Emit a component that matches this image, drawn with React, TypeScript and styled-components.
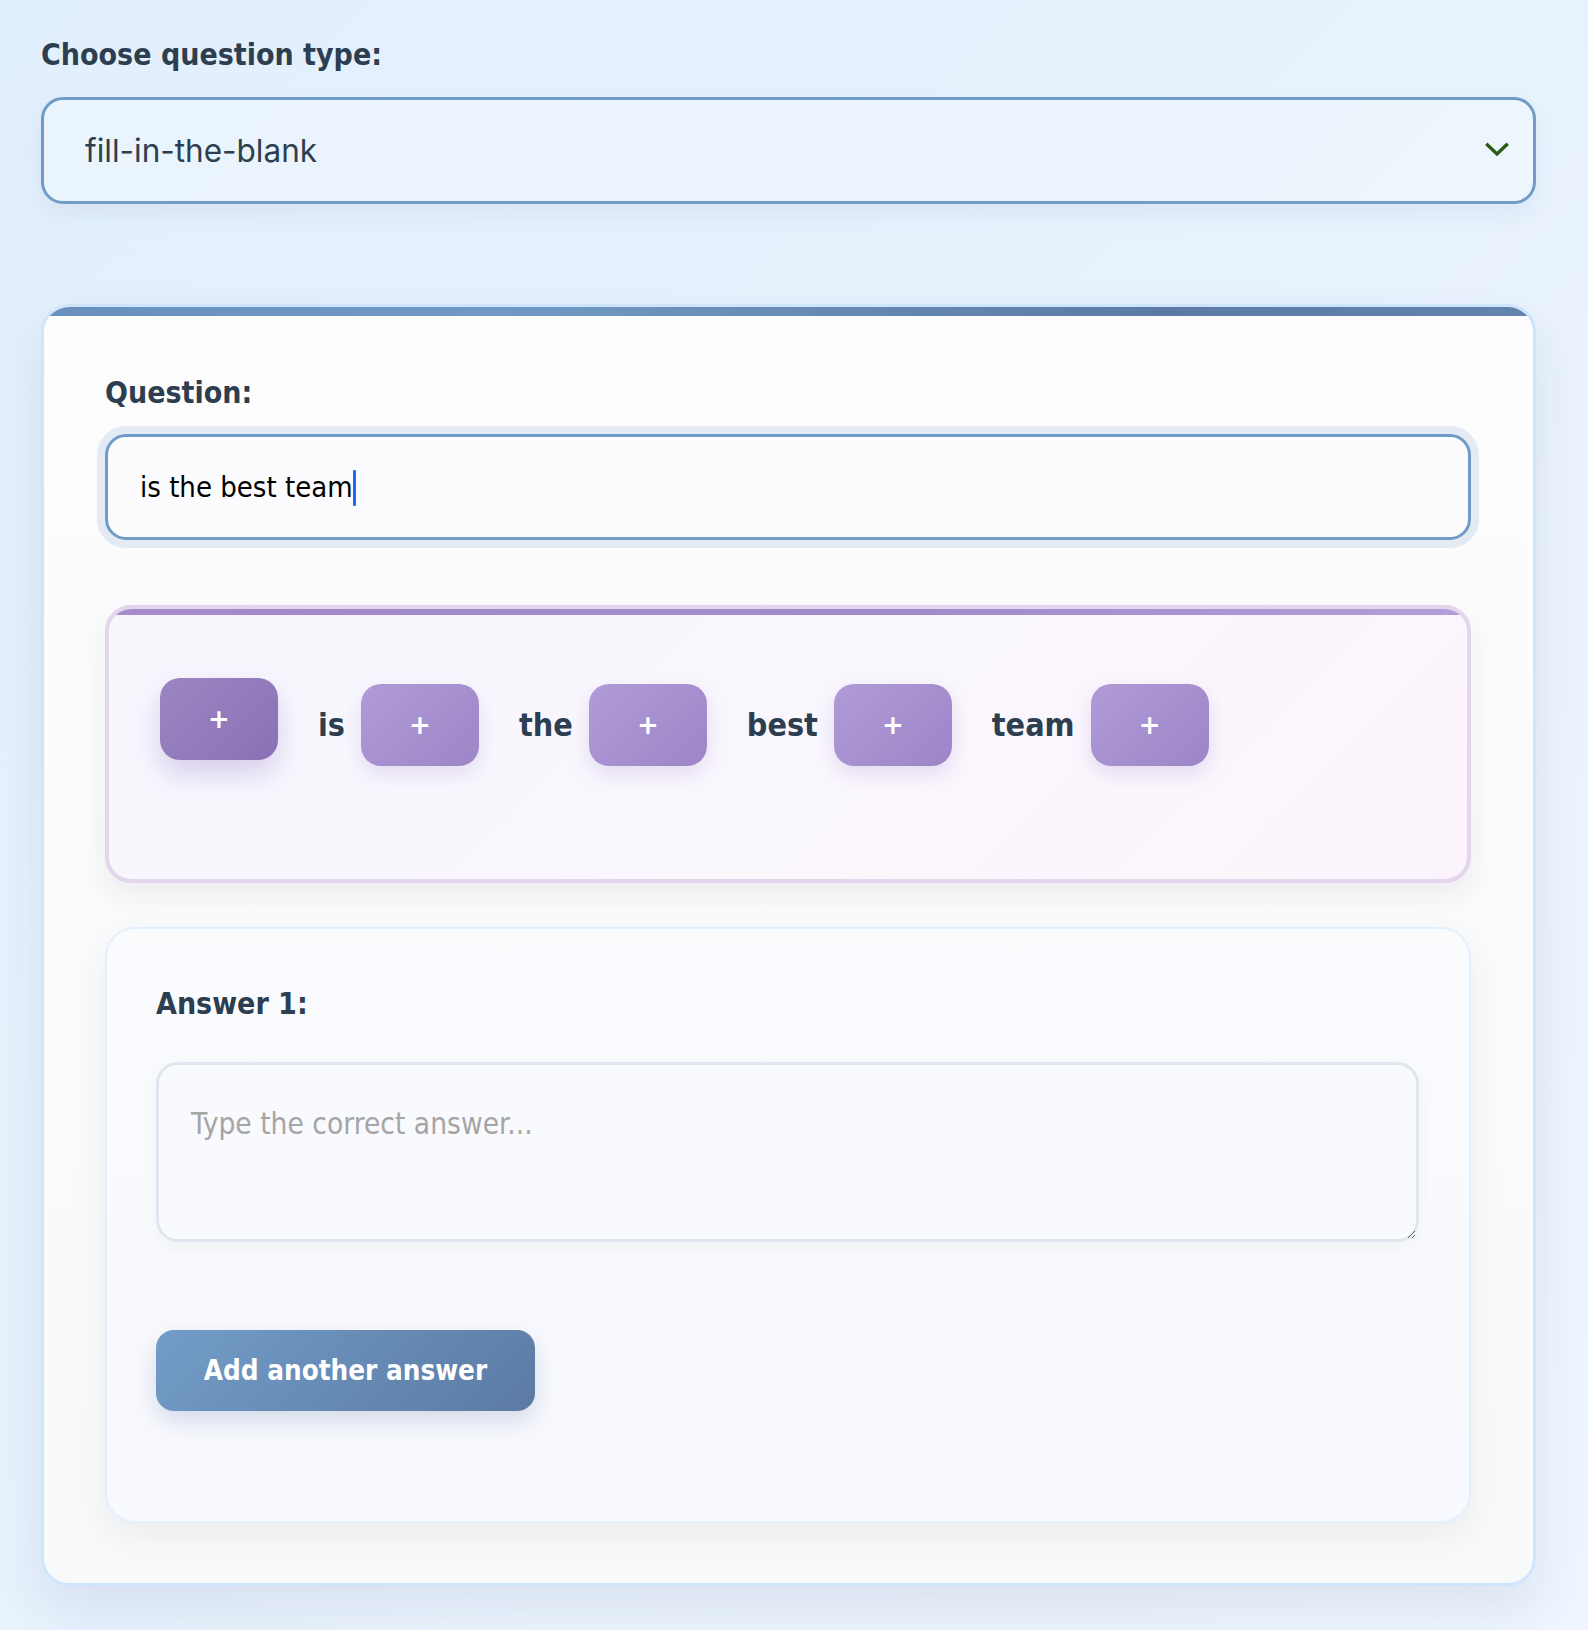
import React, { useLayoutEffect, useState } from "react";
import styled, { createGlobalStyle } from "styled-components";

const BODY_FONT = `"DejaVu Sans Condensed", "DejaVu Sans", sans-serif`;

const GlobalStyle = createGlobalStyle`
  html, body {
    margin: 0;
    padding: 0;
  }
  body {
    min-height: 1630px;
    background: linear-gradient(135deg, #e2effc 0%, #e8f2fd 50%, #eef5fe 100%);
    font-family: ${BODY_FONT};
    font-stretch: semi-condensed;
  }
  * { box-sizing: border-box; }
`;

const Page = styled.div`
  padding: 37px 52px 46px 41px;
  display: flex;
  flex-direction: column;
`;

const Label = styled.label<{ $mb?: number }>`
  display: block;
  font-family: ${BODY_FONT};
  font-stretch: semi-condensed;
  font-weight: 700;
  font-size: 30px;
  line-height: 36px;
  color: #2c3e50;
  margin-bottom: ${(p) => p.$mb ?? 24}px;
`;

const SelectWrap = styled.div`
  position: relative;
  width: 100%;
  margin-bottom: 100px;
`;

const Select = styled.select`
  appearance: none;
  -webkit-appearance: none;
  width: 100%;
  height: 107px;
  padding: 0 80px 0 41px;
  border: 3px solid #729cc8;
  border-radius: 22px;
  background: rgba(240, 247, 254, 0.55);
  box-shadow: 0 10px 24px rgba(60, 90, 130, 0.07);
  font-family: Inter, "Noto Sans", sans-serif;
  font-size: 31.5px;
  color: #2c3e50;
  outline: none;
`;

const Chevron = styled.svg`
  position: absolute;
  right: 27px;
  top: 45px;
  width: 24px;
  height: 16px;
  pointer-events: none;
`;

const Card = styled.section`
  position: relative;
  overflow: hidden;
  border: 3px solid #cfe5fc;
  border-radius: 28px;
  background: linear-gradient(180deg, #fdfdfe 0%, #f8f9fa 100%);
  box-shadow: 0 22px 50px rgba(40, 60, 100, 0.09);
  padding: 68px 62px 60px 61px;
  display: flex;
  flex-direction: column;
  &::before {
    content: "";
    position: absolute;
    left: 0;
    right: 0;
    top: 0;
    height: 9px;
    background: linear-gradient(90deg, #6a91bd 0%, #7299c6 30%, #5b7ba4 75%, #6384ae 100%);
  }
`;

const InputWrap = styled.div`
  position: relative;
  margin-bottom: 65px;
`;

const QuestionInput = styled.input`
  display: block;
  width: 100%;
  height: 106px;
  padding: 0 32px;
  border: 3px solid #729cc8;
  border-radius: 21px;
  background: #fcfcfe;
  box-shadow: 0 0 0 8px rgba(114, 156, 200, 0.18);
  font-family: ${BODY_FONT};
  font-stretch: semi-condensed;
  font-size: 29px;
  color: #000;
  caret-color: transparent;
  outline: none;
`;

const Caret = styled.span`
  position: absolute;
  top: 36px;
  width: 3px;
  height: 36px;
  border-radius: 1px;
  background: #1d6bf5;
  pointer-events: none;
`;

const BlankBox = styled.div`
  position: relative;
  overflow: hidden;
  border: 4px solid #e3d5eb;
  border-radius: 26px;
  background: linear-gradient(135deg, #f7f7fe 0%, #faf7fd 55%, #fcf4fc 100%);
  box-shadow: 0 12px 30px rgba(40, 40, 60, 0.07);
  padding: 75px 50px 113px 51px;
  margin-bottom: 44px;
  &::before {
    content: "";
    position: absolute;
    left: 0;
    right: 0;
    top: 0;
    height: 6px;
    background: linear-gradient(90deg, #a48bc9 0%, #a18ccb 60%, #b39ed9 100%);
  }
`;

const TokenRow = styled.div`
  display: flex;
  flex-wrap: wrap;
  align-items: center;
  gap: 16px;
`;

const Word = styled.span`
  margin-left: 24px;
  font-family: ${BODY_FONT};
  font-stretch: semi-condensed;
  font-weight: 700;
  font-size: 32px;
  color: #2c3e50;
  line-height: 1;
`;

const BlankButton = styled.button<{ $active?: boolean }>`
  width: 118px;
  height: 82px;
  border: none;
  border-radius: 20px;
  color: #fff;
  font-family: "DejaVu Sans", sans-serif;
  font-weight: 700;
  font-size: 26px;
  line-height: 1;
  display: flex;
  align-items: center;
  justify-content: center;
  cursor: pointer;
  background: ${(p) =>
    p.$active
      ? "linear-gradient(135deg, #9b85c3 0%, #8a71b5 100%)"
      : "linear-gradient(135deg, #b09bd8 0%, #9d85c7 100%)"};
  box-shadow: ${(p) =>
    p.$active
      ? "0 14px 28px rgba(130, 100, 190, 0.28)"
      : "0 8px 20px rgba(150, 120, 200, 0.22)"};
  transform: translateY(${(p) => (p.$active ? -6 : 0)}px);
`;

const AnswerCard = styled.div`
  border: 2px solid #e2effc;
  border-radius: 30px;
  background: linear-gradient(180deg, #fafbfd 0%, #f8f9fe 100%);
  box-shadow: 0 12px 34px rgba(40, 50, 70, 0.07);
  padding: 57px 50px 110px 49px;
  display: flex;
  flex-direction: column;
  align-items: flex-start;
`;

const AnswerArea = styled.textarea`
  width: 100%;
  height: 180px;
  padding: 42px 32px 20px;
  border: 3px solid #dfe6ef;
  border-radius: 22px;
  background: #f9fafe;
  box-shadow: 0 6px 16px rgba(40, 50, 70, 0.04);
  font-family: ${BODY_FONT};
  font-stretch: semi-condensed;
  font-size: 29.6px;
  line-height: 1.2;
  color: #2c3e50;
  outline: none;
  margin-bottom: 88px;
  &::placeholder {
    color: #a5a5a5;
  }
`;

const AddButton = styled.button`
  width: 379px;
  height: 81px;
  border: none;
  border-radius: 18px;
  background: linear-gradient(135deg, #729dc8 0%, #5b7aa3 100%);
  box-shadow: 0 10px 24px rgba(80, 110, 160, 0.22);
  color: #fff;
  font-family: ${BODY_FONT};
  font-stretch: semi-condensed;
  font-weight: 700;
  font-size: 27.6px;
  cursor: pointer;
`;

const words = ["is", "the", "best", "team"];
const QUESTION = "is the best team";

function useTextWidth(text: string, font: string) {
  const [w, setW] = useState(212);
  useLayoutEffect(() => {
    const ctx = document.createElement("canvas").getContext("2d");
    if (!ctx) return;
    ctx.font = font;
    setW(ctx.measureText(text).width);
  }, [text, font]);
  return w;
}

export default function App() {
  const textWidth = useTextWidth(QUESTION, `29px ${BODY_FONT}`);
  return (
    <>
      <GlobalStyle />
      <Page>
        <Label $mb={24}>Choose question type:</Label>
        <SelectWrap>
          <Select defaultValue="fill-in-the-blank">
            <option value="multiple-choice">multiple-choice</option>
            <option value="fill-in-the-blank">fill-in-the-blank</option>
            <option value="true-false">true-false</option>
          </Select>
          <Chevron viewBox="0 0 24 16" aria-hidden="true">
            <path d="M2.5 3 L12 12 L21.5 3" fill="none" stroke="#2b5a10" strokeWidth="3.4" strokeLinecap="square" />
          </Chevron>
        </SelectWrap>

        <Card>
          <Label $mb={23}>Question:</Label>
          <InputWrap>
            <QuestionInput defaultValue={QUESTION} autoFocus />
            <Caret style={{ left: 35 + textWidth }} />
          </InputWrap>
          <BlankBox>
            <TokenRow>
              <BlankButton $active>+</BlankButton>
              {words.map((w) => (
                <React.Fragment key={w}>
                  <Word>{w}</Word>
                  <BlankButton>+</BlankButton>
                </React.Fragment>
              ))}
            </TokenRow>
          </BlankBox>
          <AnswerCard>
            <Label $mb={40}>Answer 1:</Label>
            <AnswerArea placeholder="Type the correct answer..." />
            <AddButton>Add another answer</AddButton>
          </AnswerCard>
        </Card>
      </Page>
    </>
  );
}
